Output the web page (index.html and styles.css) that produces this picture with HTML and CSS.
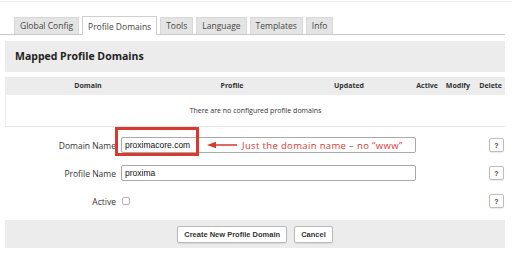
FILE: index.html
```html
<!DOCTYPE html>
<html>
<head>
<meta charset="utf-8">
<link rel="stylesheet" href="styles.css">
</head>
<body>
<div class="topline"></div>
<div class="tabs">
  <div class="tab">Global Config</div>
  <div class="tab active">Profile Domains</div>
  <div class="tab">Tools</div>
  <div class="tab">Language</div>
  <div class="tab">Templates</div>
  <div class="tab">Info</div>
</div>
<div class="content">
  <div class="panel-head">Mapped Profile Domains</div>
  <div class="table">
    <div class="thead">
      <div class="th c-domain">Domain</div>
      <div class="th c-profile">Profile</div>
      <div class="th c-updated">Updated</div>
      <div class="th c-active">Active</div>
      <div class="th c-modify">Modify</div>
      <div class="th c-delete">Delete</div>
    </div>
    <div class="empty">There are no configured profile domains</div>
  </div>
  <div class="form">
    <div class="row">
      <label class="lbl">Domain Name</label>
      <div class="field">
        <input class="txt" type="text" value="proximacore.com">
        <div class="callout-box"></div>
        <div class="callout">
          <svg class="arrow" width="31" height="8" viewBox="0 0 31 8"><path d="M0 4 L9 0.8 L9 3.2 L30 3.2 L30 4.8 L9 4.8 L9 7.2 Z" fill="#d9392f"/></svg>
          <span class="note">Just the domain name – no “www”</span>
        </div>
      </div>
      <button class="help">?</button>
    </div>
    <div class="row">
      <label class="lbl">Profile Name</label>
      <div class="field"><input class="txt" type="text" value="proxima"></div>
      <button class="help">?</button>
    </div>
    <div class="row">
      <label class="lbl">Active</label>
      <div class="field"><input class="chk" type="checkbox"></div>
      <button class="help">?</button>
    </div>
  </div>
  <div class="actions">
    <button class="btn">Create New Profile Domain</button>
    <button class="btn">Cancel</button>
  </div>
</div>
</body>
</html>
```
FILE: styles.css
```css
* { box-sizing: border-box; }
body {
  margin: 0;
  width: 512px;
  height: 277px;
  overflow: hidden;
  background: #fff;
  font-family: "Open Sans", "Liberation Sans", sans-serif;
  color: #333;
}
.topline {
  margin-top: 1px;
  height: 1px;
  background: #ececec;
}
.tabs {
  display: flex;
  align-items: flex-end;
  width: 505px;
  margin-top: 14px;
  padding-left: 14px;
  border-bottom: 1px solid #c8c8c8;
  height: 19px;
}
.tab {
  height: 17px;
  margin-right: 3px;
  padding: 0 5px;
  background: #e4e4e4;
  border: 1px solid #d8d8d8;
  border-bottom: none;
  font-size: 8.5px;
  line-height: 16px;
  color: #444;
}
.tab.active {
  height: 19px;
  margin-bottom: -1px;
  background: #fff;
  border-color: #cfcfcf;
  line-height: 19px;
}
.content {
  padding-left: 5px;
  width: 505px;
}
.panel-head {
  margin-top: 6px;
  height: 31px;
  background: #ececec;
  padding-left: 10px;
  font-weight: 700;
  font-size: 10.5px;
  line-height: 31px;
  color: #222;
}
.table {
  margin-top: 5px;
  border-left: 1px solid #ececec;
  border-bottom: 1px solid #e6e6e6;
}
.thead {
  display: flex;
  height: 18px;
  background: #ececec;
  font-weight: 700;
  font-size: 7px;
  line-height: 18px;
  color: #333;
}
.th { text-align: center; white-space: nowrap; flex: none; }
.c-domain { width: 164px; }
.c-profile { width: 124px; }
.c-updated { width: 110px; }
.c-active { width: 37px; text-align: right; padding-right: 3px; }
.c-modify { width: 32px; text-align: right; padding-right: 3px; }
.c-delete { width: 32px; text-align: right; padding-right: 3px; }
.empty {
  height: 31px;
  line-height: 31px;
  text-align: center;
  font-size: 7px;
  color: #333;
}
.form {
  display: flex;
  flex-direction: column;
  gap: 12px;
  padding-top: 10px;
}
.row {
  display: flex;
  align-items: center;
  height: 16px;
}
.lbl {
  width: 111px;
  text-align: right;
  font-size: 8.5px;
  color: #333;
}
.field {
  position: relative;
  margin-left: 5px;
  width: 295px;
  height: 16px;
  display: flex;
  align-items: center;
}
.txt {
  width: 295px;
  height: 16px;
  margin: 0;
  padding: 0 3px;
  border: 1px solid #a9a9a9;
  border-radius: 2px;
  font-family: "Liberation Sans", Arial, sans-serif;
  font-size: 8.5px;
  color: #111;
  background: #fff;
}
.chk {
  -webkit-appearance: none;
  appearance: none;
  margin: 0 0 0 1px;
  width: 8px;
  height: 8px;
  border: 1px solid #b5b5b5;
  border-radius: 2px;
  background: #fff;
}
.help {
  margin-left: 73px;
  width: 15px;
  height: 14px;
  padding: 0;
  border: 1px solid #bdbdbd;
  border-radius: 2px;
  background: #fff;
  box-shadow: 0 1px 1px rgba(0,0,0,0.08);
  font-family: "Liberation Sans", Arial, sans-serif;
  font-weight: 700;
  font-size: 7px;
  color: #444;
}
.callout-box {
  position: absolute;
  left: -6px;
  top: -10px;
  width: 84px;
  height: 29px;
  border: 3px solid #d9392f;
}
.callout {
  position: absolute;
  left: 86px;
  top: 0;
  height: 16px;
  display: flex;
  align-items: center;
  gap: 4px;
}
.arrow { display: block; }
.note {
  font-size: 9.5px;
  letter-spacing: 0.35px;
  color: #d9392f;
  white-space: nowrap;
}
.actions {
  margin-top: 11px;
  height: 28px;
  background: #ececec;
  display: flex;
  justify-content: center;
  align-items: center;
  gap: 7px;
}
.btn {
  height: 17px;
  padding: 0 6px;
  border: 1px solid #b9b9b9;
  border-radius: 2px;
  background: #fff;
  box-shadow: 0 1px 1px rgba(0,0,0,0.08);
  font-family: "Liberation Sans", Arial, sans-serif;
  font-weight: 700;
  font-size: 7.5px;
  color: #333;
}
```
